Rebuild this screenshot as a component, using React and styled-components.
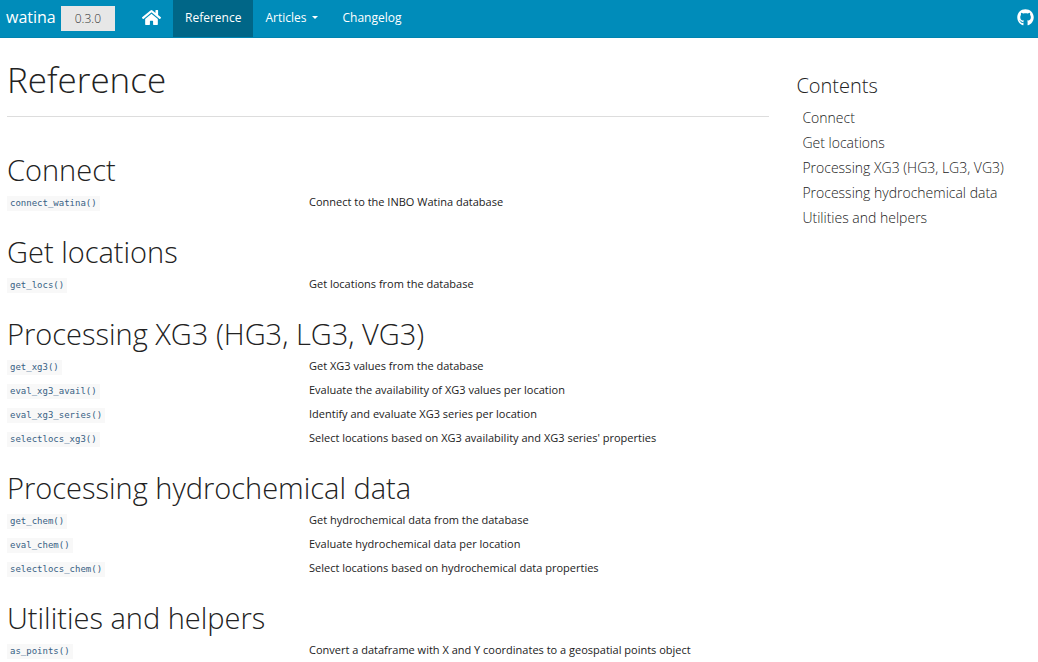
import React from "react";
import styled, { createGlobalStyle } from "styled-components";
import { FaHome, FaGithub } from "react-icons/fa";

const GlobalStyle = createGlobalStyle`
  *, *::before, *::after { box-sizing: border-box; }
  body {
    margin: 0;
    background: #fff;
    color: #222;
    font-family: "Open Sans", "Liberation Sans", sans-serif;
    font-size: 11px;
    line-height: 16px;
  }
  a { color: inherit; text-decoration: none; }
`;

const Navbar = styled.header`
  display: flex;
  align-items: stretch;
  height: 38px;
  padding: 0 4px 0 6px;
  background: #008cba;
  border-bottom: 1px solid #0084b0;
  color: #fff;
`;

const Brand = styled.div`
  display: flex;
  align-items: center;
  gap: 5px;
  padding-right: 15px;
`;

const BrandLink = styled.a`
  font-size: 16px;
  line-height: 20px;
  padding-bottom: 4px;
`;

const Version = styled.span`
  padding: 0 14px;
  background: #e7e7e7;
  color: #333;
  font-size: 12px;
  font-weight: 300;
  line-height: 25px;
`;

const NavLinks = styled.nav`
  display: flex;
  flex: 1;
`;

const navItem = `
  display: flex;
  align-items: center;
  gap: 6px;
  padding: 0 12px 2px;
  font-size: 12px;
`;

const NavLink = styled.a`
  ${navItem}
  background: ${(p) => (p.$active ? "#006687" : "transparent")};
`;

const NavMenu = styled.button`
  ${navItem}
  border: 0;
  background: transparent;
  color: inherit;
  font-family: inherit;
`;

const Caret = styled.span`
  border: 3px solid transparent;
  border-top-color: currentColor;
  border-bottom: 0;
`;

const IconLink = styled.a`
  display: flex;
  align-items: center;
  padding-bottom: 3px;
`;

const Page = styled.div`
  display: flex;
  align-items: flex-start;
  gap: 27px;
  padding: 0 7px;
`;

const Main = styled.main`
  flex: 13;
  min-width: 0;
`;

const PageHeader = styled.div`
  padding: 16px 0 10px;
  border-bottom: 1px solid #ddd;
`;

const Title = styled.h1`
  margin: 0;
  font-size: 35px;
  font-weight: 300;
  line-height: 52px;
`;

const Index = styled.div`
  padding-top: 32px;
`;

const Section = styled.section`
  margin-bottom: 16px;
`;

const SectionTitle = styled.h2`
  margin: 0;
  font-size: 29px;
  font-weight: 300;
  line-height: 42px;
`;

const FunctionTable = styled.table`
  width: 100%;
  table-layout: fixed;
  border-collapse: collapse;
`;

const NameCell = styled.td`
  width: 302px;
  height: 24px;
  padding: 0;
`;

const TextCell = styled.td`
  padding: 0 0 2px;
`;

const Code = styled.code`
  display: block;
  width: fit-content;
  padding: 0 3px;
  background: #f8f8f8;
  color: #375f84;
  font-family: "DejaVu Sans Mono", monospace;
  font-size: 9px;
  line-height: 15px;
`;

const Sidebar = styled.aside`
  flex: 4;
  min-width: 0;
  padding-top: 34px;
`;

const SidebarTitle = styled.h2`
  margin: 0;
  font-size: 20px;
  font-weight: 300;
  line-height: 28px;
`;

const TocList = styled.ul`
  margin: 5px 0 0;
  padding: 0 0 0 6px;
  list-style: none;
  font-size: 14px;
  font-weight: 300;
  line-height: 25px;
`;

const sections = [
  { id: "connect", title: "Connect", items: [["connect_watina()", "Connect to the INBO Watina database"]] },
  { id: "get-locations", title: "Get locations", items: [["get_locs()", "Get locations from the database"]] },
  {
    id: "processing-xg3",
    title: "Processing XG3 (HG3, LG3, VG3)",
    items: [
      ["get_xg3()", "Get XG3 values from the database"],
      ["eval_xg3_avail()", "Evaluate the availability of XG3 values per location"],
      ["eval_xg3_series()", "Identify and evaluate XG3 series per location"],
      ["selectlocs_xg3()", "Select locations based on XG3 availability and XG3 series' properties"],
    ],
  },
  {
    id: "processing-hydrochemical-data",
    title: "Processing hydrochemical data",
    items: [
      ["get_chem()", "Get hydrochemical data from the database"],
      ["eval_chem()", "Evaluate hydrochemical data per location"],
      ["selectlocs_chem()", "Select locations based on hydrochemical data properties"],
    ],
  },
  {
    id: "utilities-and-helpers",
    title: "Utilities and helpers",
    items: [["as_points()", "Convert a dataframe with X and Y coordinates to a geospatial points object"]],
  },
];

export default function App() {
  return (
    <>
      <GlobalStyle />
      <Navbar>
        <Brand>
          <BrandLink href="#">watina</BrandLink>
          <Version>0.3.0</Version>
        </Brand>
        <NavLinks>
          <NavLink href="#" aria-label="Home"><FaHome size={19} /></NavLink>
          <NavLink href="#" $active aria-current="page">Reference</NavLink>
          <NavMenu type="button" aria-haspopup="true">Articles <Caret /></NavMenu>
          <NavLink href="#">Changelog</NavLink>
        </NavLinks>
        <IconLink href="#" aria-label="GitHub"><FaGithub size={17} /></IconLink>
      </Navbar>
      <Page>
        <Main>
          <PageHeader><Title>Reference</Title></PageHeader>
          <Index>
            {sections.map((s) => (
              <Section key={s.id} id={s.id}>
                <SectionTitle>{s.title}</SectionTitle>
                <FunctionTable>
                  <tbody>
                    {s.items.map(([name, text]) => (
                      <tr key={name}>
                        <NameCell><a href="#"><Code>{name}</Code></a></NameCell>
                        <TextCell>{text}</TextCell>
                      </tr>
                    ))}
                  </tbody>
                </FunctionTable>
              </Section>
            ))}
          </Index>
        </Main>
        <Sidebar>
          <SidebarTitle>Contents</SidebarTitle>
          <TocList>
            {sections.map((s) => (
              <li key={s.id}><a href={"#" + s.id}>{s.title}</a></li>
            ))}
          </TocList>
        </Sidebar>
      </Page>
    </>
  );
}
